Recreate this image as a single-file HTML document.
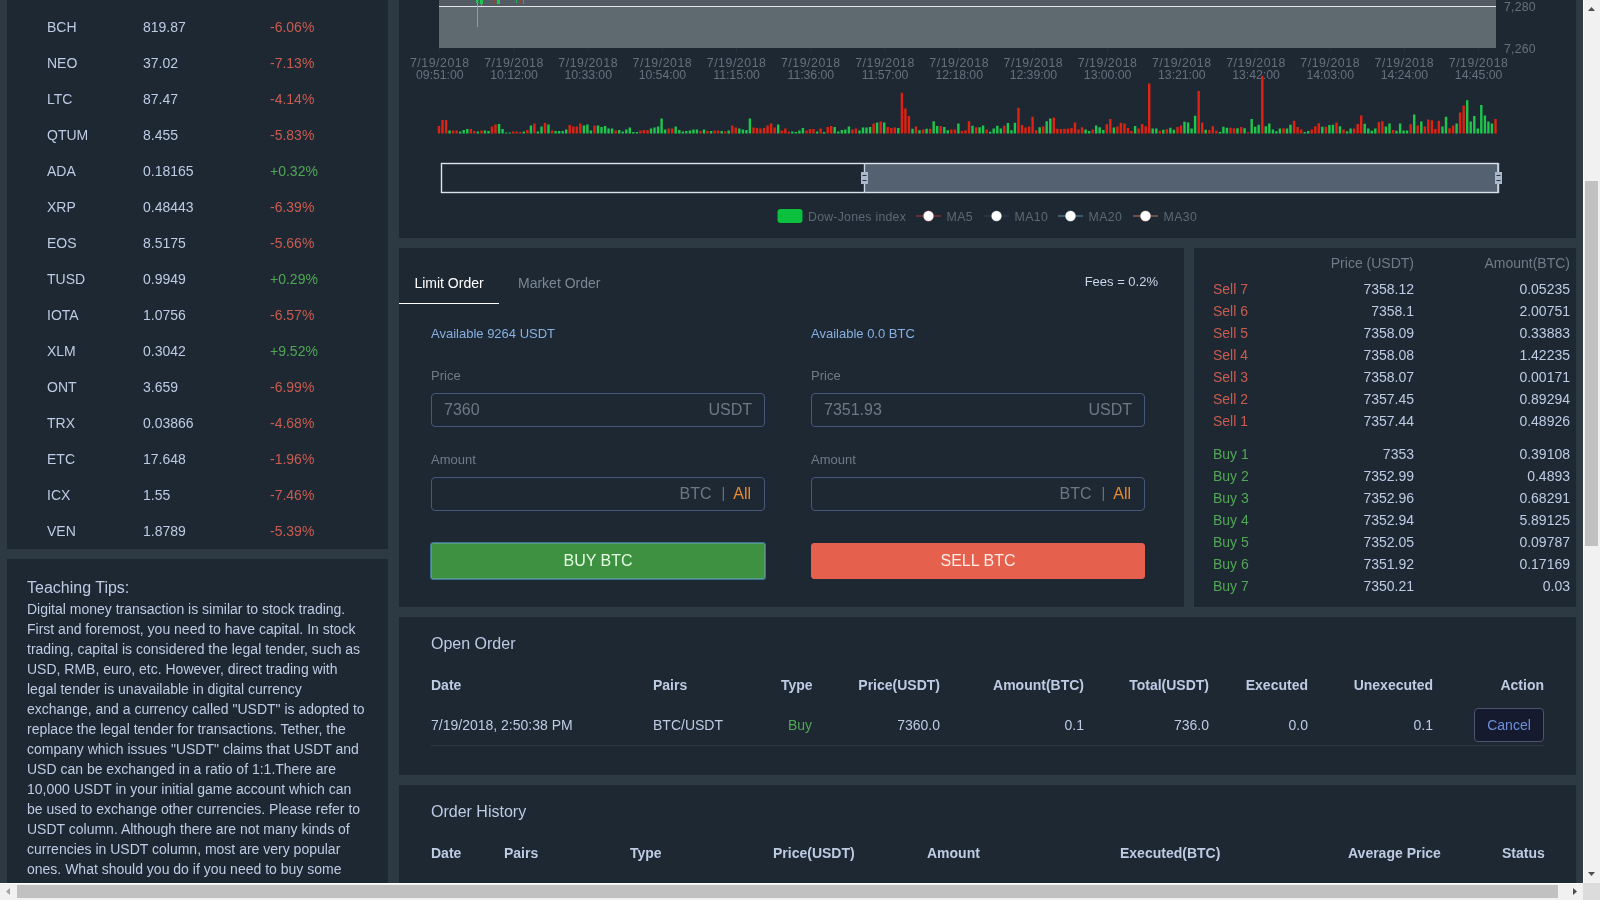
<!DOCTYPE html>
<html lang="en">
<head>
<meta charset="utf-8">
<title>BTC/USDT Trading Simulator</title>
<style>
*{box-sizing:border-box;margin:0;padding:0}
html,body{width:1600px;height:900px;overflow:hidden;background:#2d3a43}
body{font-family:"Liberation Sans",sans-serif;font-size:14px;color:#bdcbe3;position:relative;will-change:transform}
.panel{position:absolute;background:#1d2833}
/* ticker list */
#tickers{left:7px;top:0;width:381px;height:549px}
#tickers table{position:absolute;left:0;top:9px;width:100%;border-collapse:collapse}
#tickers td{height:36px;line-height:36px;padding:0;white-space:nowrap}
#tickers td.s{padding-left:40px;width:136px}
#tickers td.p{width:127px}
.up{color:#52a656}.dn{color:#c95c50}
/* tips */
#tips{left:7px;top:559px;width:381px;height:341px;padding:19px 20px 0 20px}
#tips h4{font-weight:normal;font-size:16px;line-height:20px;height:21px}
#tips p{line-height:20px;font-size:14px}
/* chart */
#chart{left:399px;top:0;width:1177px;height:238px}
#chart svg{position:absolute;left:0;top:0}
/* form */
#form{left:399px;top:248px;width:785px;height:359px}
#book{left:1194px;top:248px;width:382px;height:359px}
#open{left:399px;top:617px;width:1177px;height:158px}
#hist{left:399px;top:785px;width:1177px;height:115px}

.tabs{position:absolute;left:0;top:0;width:100%;height:56px}
.tab{position:absolute;top:16px;height:40px;line-height:39px;font-size:14px;color:#7b8794}
.tab.on{left:0;width:100px;text-align:center;color:#fff;border-bottom:1px solid #fff}
.tab:nth-child(2){left:119px}
.fees{position:absolute;right:26px;top:14px;line-height:39px;font-size:13px;color:#c9d6ea}
.col{position:absolute;top:0;width:334px;height:100%}
.avail{position:absolute;left:0;top:76px;line-height:20px;font-size:13px;color:#87b0e2}
.lb{position:absolute;left:0;line-height:20px;font-size:13px;color:#6f7b88}
.inp{position:absolute;left:0;width:334px;height:34px;border:1px solid #46587a;border-radius:4px;font-size:16px;line-height:32px;color:#6c7885}
.inp .ph{position:absolute;left:12px;top:0}
.inp .unit{position:absolute;right:12px;top:0}
.inp i{font-style:normal;margin:0 8px 0 10px;font-size:14px;position:relative;top:-1px}
.inp b{font-weight:normal;color:#e98a2c;margin-right:1px}
.btn{position:absolute;left:0;top:295px;width:334px;height:36px;border-radius:3px;font-family:inherit;font-size:16px;line-height:34px;text-align:center}
.btn.buy{left:-1px;top:294px;width:336px;height:38px;border-radius:3px;background:#3f9142;border:1px solid #3c7390;box-shadow:inset 0 0 0 1px #5a9c82;line-height:36px;color:#e3ffe3}
.btn.sell{background:#e5604d;border:1px solid #e5604d;color:#ffece6}
#book table{position:absolute;left:0;top:4px;width:100%;border-collapse:collapse}
#book th{font-weight:normal;color:#6f7b88;text-align:right;height:22px;line-height:22px}
#book td{height:22px;line-height:22px;text-align:right;padding:0}
#book th:nth-child(1),#book td:nth-child(1){text-align:left;padding-left:19px;width:91px}
#book th:nth-child(2),#book td:nth-child(2){width:130px;padding-right:1px}
#book th:nth-child(3),#book td:nth-child(3){padding-right:6px}
#book tbody.gap td{height:11px;line-height:11px}
#book thead th{height:26px;line-height:20px;vertical-align:top;padding-top:1px}
h5{position:absolute;left:32px;top:17px;font-size:16px;font-weight:normal;line-height:20px;color:#bdcbe3}
#open table{position:absolute;left:32px;top:47px;width:1113px;border-collapse:collapse;table-layout:fixed}
#open th{font-weight:bold;text-align:right;height:42px;padding:0}
#open td{text-align:right;height:39px;padding:0;border-bottom:1px solid #2c3846;line-height:20px}
#open .l{text-align:left}
.cancel{display:block;margin:-1px 0 0 auto;width:70px;height:34px;border:1px solid #4a556c;border-radius:4px;background:#161a2e;color:#6e8fdc;font-family:inherit;font-size:14px;line-height:32px;padding:0}
.hrow{position:absolute;left:32px;top:58px;width:1120px;border-collapse:collapse;table-layout:fixed}
.hrow th{height:20px;line-height:20px;padding:0;font-weight:bold;text-align:left;white-space:nowrap}
/* scrollbars */
#vsb{position:absolute;left:1583px;top:0;width:17px;height:883px;background:#f1f1f1;box-shadow:inset 1px 0 0 #fff}
#vsb svg,#hsb svg{position:absolute;left:0;top:0}
#hsb{position:absolute;left:0;top:883px;width:1583px;height:17px;background:#f1f1f1;box-shadow:inset 0 1px 0 #fff}
#corner{position:absolute;left:1583px;top:883px;width:17px;height:17px;background:#dcdcdc}
.thumb{position:absolute;background:#c1c1c1}
</style>
</head>
<body>
<div class="panel" id="tickers">
<table>
<tr><td class="s">BCH</td><td class="p">819.87</td><td class="dn">-6.06%</td></tr>
<tr><td class="s">NEO</td><td class="p">37.02</td><td class="dn">-7.13%</td></tr>
<tr><td class="s">LTC</td><td class="p">87.47</td><td class="dn">-4.14%</td></tr>
<tr><td class="s">QTUM</td><td class="p">8.455</td><td class="dn">-5.83%</td></tr>
<tr><td class="s">ADA</td><td class="p">0.18165</td><td class="up">+0.32%</td></tr>
<tr><td class="s">XRP</td><td class="p">0.48443</td><td class="dn">-6.39%</td></tr>
<tr><td class="s">EOS</td><td class="p">8.5175</td><td class="dn">-5.66%</td></tr>
<tr><td class="s">TUSD</td><td class="p">0.9949</td><td class="up">+0.29%</td></tr>
<tr><td class="s">IOTA</td><td class="p">1.0756</td><td class="dn">-6.57%</td></tr>
<tr><td class="s">XLM</td><td class="p">0.3042</td><td class="up">+9.52%</td></tr>
<tr><td class="s">ONT</td><td class="p">3.659</td><td class="dn">-6.99%</td></tr>
<tr><td class="s">TRX</td><td class="p">0.03866</td><td class="dn">-4.68%</td></tr>
<tr><td class="s">ETC</td><td class="p">17.648</td><td class="dn">-1.96%</td></tr>
<tr><td class="s">ICX</td><td class="p">1.55</td><td class="dn">-7.46%</td></tr>
<tr><td class="s">VEN</td><td class="p">1.8789</td><td class="dn">-5.39%</td></tr>
</table>
</div>
<div class="panel" id="tips">
<h4>Teaching Tips:</h4>
<p>Digital money transaction is similar to stock trading. First and foremost, you need to have capital. In stock trading, capital is considered the legal tender, such as USD, RMB, euro, etc. However, direct trading with legal tender is unavailable in digital currency exchange, and a currency called "USDT" is adopted to replace the legal tender for transactions. Tether, the company which issues "USDT" claims that USDT and USD can be exchanged in a ratio of 1:1.There are 10,000 USDT in your initial game account which can be used to exchange other currencies. Please refer to USDT column. Although there are not many kinds of currencies in USDT column, most are very popular ones. What should you do if you need to buy some currencies which are not listed in USDT column?</p>
</div>
<div class="panel" id="chart"><!--CHART-->
<svg width="1177" height="238" viewBox="399 0 1177 238" font-family="'Liberation Sans',sans-serif" font-size="12.3">
<rect x="439" y="0" width="1057" height="6.5" fill="#525b63"/>
<rect x="439" y="6.5" width="1057" height="41.5" fill="#5f6a70"/>
<rect x="439" y="6" width="1057" height="1" fill="#e4e8eb"/>
<g>
<rect x="477" y="0" width="1" height="27" fill="#4fd27c" opacity="0.9"/>
<rect x="476" y="0" width="2.4" height="3" fill="#1fc54c"/>
<rect x="480" y="0" width="3" height="4" fill="#1fc54c"/>
<rect x="481" y="4" width="1" height="2" fill="#1fc54c"/>
<rect x="493.5" y="0" width="2" height="4" fill="#8a4a32"/>
<rect x="497" y="0" width="3" height="4" fill="#1fc54c"/>
<rect x="516" y="0" width="1" height="3" fill="#1fc54c" opacity="0.8"/>
<rect x="520" y="0" width="1.4" height="3.5" fill="#8a4a32"/>
<rect x="523" y="0" width="1" height="4" fill="#1fc54c" opacity="0.8"/>
</g>
<g fill="#65717d" letter-spacing="0.2">
<text x="1504" y="10.5">7,280</text>
<text x="1504" y="52.5">7,260</text>
</g>
<g fill="#65717d" text-anchor="middle" letter-spacing="0.55">
<rect x="439.3" y="48" width="1" height="5" fill="#26313c"/>
<text x="439.8" y="66.8">7/19/2018</text><text x="439.8" y="78.8" letter-spacing="-0.05">09:51:00</text>
<rect x="513.5" y="48" width="1" height="5" fill="#26313c"/>
<text x="514.0" y="66.8">7/19/2018</text><text x="514.0" y="78.8" letter-spacing="-0.05">10:12:00</text>
<rect x="587.7" y="48" width="1" height="5" fill="#26313c"/>
<text x="588.2" y="66.8">7/19/2018</text><text x="588.2" y="78.8" letter-spacing="-0.05">10:33:00</text>
<rect x="661.9" y="48" width="1" height="5" fill="#26313c"/>
<text x="662.4" y="66.8">7/19/2018</text><text x="662.4" y="78.8" letter-spacing="-0.05">10:54:00</text>
<rect x="736.1" y="48" width="1" height="5" fill="#26313c"/>
<text x="736.6" y="66.8">7/19/2018</text><text x="736.6" y="78.8" letter-spacing="-0.05">11:15:00</text>
<rect x="810.3" y="48" width="1" height="5" fill="#26313c"/>
<text x="810.8" y="66.8">7/19/2018</text><text x="810.8" y="78.8" letter-spacing="-0.05">11:36:00</text>
<rect x="884.5" y="48" width="1" height="5" fill="#26313c"/>
<text x="885.0" y="66.8">7/19/2018</text><text x="885.0" y="78.8" letter-spacing="-0.05">11:57:00</text>
<rect x="958.7" y="48" width="1" height="5" fill="#26313c"/>
<text x="959.2" y="66.8">7/19/2018</text><text x="959.2" y="78.8" letter-spacing="-0.05">12:18:00</text>
<rect x="1032.9" y="48" width="1" height="5" fill="#26313c"/>
<text x="1033.4" y="66.8">7/19/2018</text><text x="1033.4" y="78.8" letter-spacing="-0.05">12:39:00</text>
<rect x="1107.1" y="48" width="1" height="5" fill="#26313c"/>
<text x="1107.6" y="66.8">7/19/2018</text><text x="1107.6" y="78.8" letter-spacing="-0.05">13:00:00</text>
<rect x="1181.3" y="48" width="1" height="5" fill="#26313c"/>
<text x="1181.8" y="66.8">7/19/2018</text><text x="1181.8" y="78.8" letter-spacing="-0.05">13:21:00</text>
<rect x="1255.5" y="48" width="1" height="5" fill="#26313c"/>
<text x="1256.0" y="66.8">7/19/2018</text><text x="1256.0" y="78.8" letter-spacing="-0.05">13:42:00</text>
<rect x="1329.7" y="48" width="1" height="5" fill="#26313c"/>
<text x="1330.2" y="66.8">7/19/2018</text><text x="1330.2" y="78.8" letter-spacing="-0.05">14:03:00</text>
<rect x="1403.9" y="48" width="1" height="5" fill="#26313c"/>
<text x="1404.4" y="66.8">7/19/2018</text><text x="1404.4" y="78.8" letter-spacing="-0.05">14:24:00</text>
<rect x="1478.1" y="48" width="1" height="5" fill="#26313c"/>
<text x="1478.6" y="66.8">7/19/2018</text><text x="1478.6" y="78.8" letter-spacing="-0.05">14:45:00</text>
</g>
<path fill="#df2310" d="M437.8 133.5v-7.5h2.4v7.5zM441.3 133.5v-13.5h2.4v13.5zM444.9 133.5v-13.5h2.4v13.5zM451.9 133.5v-3.0h2.4v3.0zM455.5 133.5v-3.0h2.4v3.0zM469.6 133.5v-4.5h2.4v4.5zM473.1 133.5v-2.5h2.4v2.5zM480.2 133.5v-3.0h2.4v3.0zM490.8 133.5v-7.0h2.4v7.0zM494.3 133.5v-9.0h2.4v9.0zM512.0 133.5v-2.0h2.4v2.0zM515.5 133.5v-2.0h2.4v2.0zM519.1 133.5v-1.5h2.4v1.5zM526.1 133.5v-3.5h2.4v3.5zM533.2 133.5v-10.0h2.4v10.0zM543.8 133.5v-10.5h2.4v10.5zM550.9 133.5v-3.0h2.4v3.0zM568.5 133.5v-8.5h2.4v8.5zM572.1 133.5v-7.0h2.4v7.0zM575.6 133.5v-7.0h2.4v7.0zM579.1 133.5v-10.0h2.4v10.0zM593.3 133.5v-8.0h2.4v8.0zM614.5 133.5v-3.0h2.4v3.0zM639.2 133.5v-3.0h2.4v3.0zM642.7 133.5v-3.5h2.4v3.5zM646.3 133.5v-3.5h2.4v3.5zM667.5 133.5v-5.0h2.4v5.0zM671.0 133.5v-5.0h2.4v5.0zM699.3 133.5v-2.5h2.4v2.5zM706.3 133.5v-2.5h2.4v2.5zM713.4 133.5v-3.0h2.4v3.0zM716.9 133.5v-3.0h2.4v3.0zM724.0 133.5v-2.0h2.4v2.0zM731.1 133.5v-8.0h2.4v8.0zM734.6 133.5v-6.0h2.4v6.0zM752.3 133.5v-6.0h2.4v6.0zM755.8 133.5v-5.5h2.4v5.5zM759.3 133.5v-5.0h2.4v5.0zM762.9 133.5v-5.5h2.4v5.5zM766.4 133.5v-8.0h2.4v8.0zM769.9 133.5v-10.0h2.4v10.0zM773.5 133.5v-6.0h2.4v6.0zM780.5 133.5v-3.0h2.4v3.0zM784.1 133.5v-5.0h2.4v5.0zM787.6 133.5v-2.0h2.4v2.0zM805.3 133.5v-3.0h2.4v3.0zM808.8 133.5v-4.5h2.4v4.5zM812.3 133.5v-4.5h2.4v4.5zM819.4 133.5v-5.0h2.4v5.0zM826.5 133.5v-6.5h2.4v6.5zM830.0 133.5v-7.5h2.4v7.5zM851.2 133.5v-4.0h2.4v4.0zM854.7 133.5v-5.0h2.4v5.0zM872.4 133.5v-10.0h2.4v10.0zM879.5 133.5v-12.0h2.4v12.0zM886.5 133.5v-6.5h2.4v6.5zM890.1 133.5v-5.5h2.4v5.5zM893.6 133.5v-6.0h2.4v6.0zM900.7 133.5v-40.7h2.4v40.7zM904.2 133.5v-25.0h2.4v25.0zM907.7 133.5v-17.5h2.4v17.5zM914.8 133.5v-7.0h2.4v7.0zM921.9 133.5v-4.0h2.4v4.0zM928.9 133.5v-4.7h2.4v4.7zM939.5 133.5v-7.4h2.4v7.4zM950.1 133.5v-4.0h2.4v4.0zM953.7 133.5v-4.0h2.4v4.0zM960.7 133.5v-2.5h2.4v2.5zM964.3 133.5v-3.2h2.4v3.2zM967.8 133.5v-12.2h2.4v12.2zM974.9 133.5v-6.2h2.4v6.2zM985.5 133.5v-4.0h2.4v4.0zM1003.1 133.5v-7.7h2.4v7.7zM1017.3 133.5v-25.7h2.4v25.7zM1020.8 133.5v-8.5h2.4v8.5zM1024.3 133.5v-5.9h2.4v5.9zM1027.9 133.5v-7.0h2.4v7.0zM1031.4 133.5v-16.7h2.4v16.7zM1034.9 133.5v-3.2h2.4v3.2zM1042.0 133.5v-7.0h2.4v7.0zM1052.6 133.5v-16.0h2.4v16.0zM1056.1 133.5v-4.7h2.4v4.7zM1059.7 133.5v-4.4h2.4v4.4zM1063.2 133.5v-4.7h2.4v4.7zM1066.7 133.5v-4.7h2.4v4.7zM1070.3 133.5v-5.5h2.4v5.5zM1073.8 133.5v-11.1h2.4v11.1zM1077.3 133.5v-4.0h2.4v4.0zM1080.9 133.5v-6.2h2.4v6.2zM1091.5 133.5v-4.0h2.4v4.0zM1105.6 133.5v-9.2h2.4v9.2zM1109.1 133.5v-14.5h2.4v14.5zM1116.2 133.5v-7.0h2.4v7.0zM1119.7 133.5v-10.7h2.4v10.7zM1123.3 133.5v-10.0h2.4v10.0zM1126.8 133.5v-5.5h2.4v5.5zM1130.3 133.5v-2.5h2.4v2.5zM1137.4 133.5v-5.0h2.4v5.0zM1140.9 133.5v-9.5h2.4v9.5zM1144.5 133.5v-7.2h2.4v7.2zM1148.0 133.5v-50.0h2.4v50.0zM1158.6 133.5v-2.7h2.4v2.7zM1165.7 133.5v-4.2h2.4v4.2zM1176.3 133.5v-6.5h2.4v6.5zM1179.8 133.5v-8.0h2.4v8.0zM1197.5 133.5v-42.5h2.4v42.5zM1201.0 133.5v-11.0h2.4v11.0zM1208.1 133.5v-3.5h2.4v3.5zM1211.6 133.5v-7.2h2.4v7.2zM1215.1 133.5v-2.7h2.4v2.7zM1229.3 133.5v-5.7h2.4v5.7zM1232.8 133.5v-5.3h2.4v5.3zM1239.9 133.5v-6.5h2.4v6.5zM1246.9 133.5v-1.2h2.4v1.2zM1261.1 133.5v-57.8h2.4v57.8zM1282.3 133.5v-5.3h2.4v5.3zM1292.9 133.5v-12.7h2.4v12.7zM1296.4 133.5v-6.5h2.4v6.5zM1299.9 133.5v-4.1h2.4v4.1zM1310.5 133.5v-4.1h2.4v4.1zM1314.1 133.5v-7.2h2.4v7.2zM1317.6 133.5v-10.3h2.4v10.3zM1324.7 133.5v-6.8h2.4v6.8zM1335.3 133.5v-11.1h2.4v11.1zM1342.3 133.5v-4.1h2.4v4.1zM1352.9 133.5v-4.9h2.4v4.9zM1356.5 133.5v-9.6h2.4v9.6zM1360.0 133.5v-18.1h2.4v18.1zM1377.7 133.5v-11.5h2.4v11.5zM1381.2 133.5v-12.3h2.4v12.3zM1391.8 133.5v-3.6h2.4v3.6zM1409.5 133.5v-9.3h2.4v9.3zM1416.5 133.5v-8.0h2.4v8.0zM1423.6 133.5v-7.1h2.4v7.1zM1427.1 133.5v-14.1h2.4v14.1zM1430.7 133.5v-13.2h2.4v13.2zM1434.2 133.5v-4.5h2.4v4.5zM1437.7 133.5v-12.8h2.4v12.8zM1448.3 133.5v-5.3h2.4v5.3zM1451.9 133.5v-8.0h2.4v8.0zM1458.9 133.5v-21.1h2.4v21.1zM1462.5 133.5v-28.1h2.4v28.1zM1494.3 133.5v-14.5h2.4v14.5z"/>
<path fill="#1fc54c" d="M448.4 133.5v-3.0h2.4v3.0zM459.0 133.5v-2.0h2.4v2.0zM462.5 133.5v-3.5h2.4v3.5zM466.1 133.5v-4.5h2.4v4.5zM476.7 133.5v-2.0h2.4v2.0zM483.7 133.5v-3.0h2.4v3.0zM487.3 133.5v-2.5h2.4v2.5zM497.9 133.5v-9.5h2.4v9.5zM501.4 133.5v-4.5h2.4v4.5zM504.9 133.5v-1.0h2.4v1.0zM508.5 133.5v-1.0h2.4v1.0zM522.6 133.5v-2.0h2.4v2.0zM529.7 133.5v-8.0h2.4v8.0zM536.7 133.5v-2.0h2.4v2.0zM540.3 133.5v-7.0h2.4v7.0zM547.3 133.5v-9.0h2.4v9.0zM554.4 133.5v-2.5h2.4v2.5zM557.9 133.5v-2.5h2.4v2.5zM561.5 133.5v-2.5h2.4v2.5zM565.0 133.5v-4.0h2.4v4.0zM582.7 133.5v-8.0h2.4v8.0zM586.2 133.5v-9.0h2.4v9.0zM589.7 133.5v-3.0h2.4v3.0zM596.8 133.5v-8.0h2.4v8.0zM600.3 133.5v-6.5h2.4v6.5zM603.9 133.5v-7.5h2.4v7.5zM607.4 133.5v-5.0h2.4v5.0zM610.9 133.5v-5.0h2.4v5.0zM618.0 133.5v-3.5h2.4v3.5zM621.5 133.5v-2.0h2.4v2.0zM625.1 133.5v-4.0h2.4v4.0zM628.6 133.5v-6.0h2.4v6.0zM632.1 133.5v-1.5h2.4v1.5zM635.7 133.5v-1.5h2.4v1.5zM649.8 133.5v-5.0h2.4v5.0zM653.3 133.5v-6.0h2.4v6.0zM656.9 133.5v-7.0h2.4v7.0zM660.4 133.5v-15.0h2.4v15.0zM663.9 133.5v-4.0h2.4v4.0zM674.5 133.5v-7.0h2.4v7.0zM678.1 133.5v-3.5h2.4v3.5zM681.6 133.5v-2.0h2.4v2.0zM685.1 133.5v-2.5h2.4v2.5zM688.7 133.5v-3.0h2.4v3.0zM692.2 133.5v-4.0h2.4v4.0zM695.7 133.5v-4.0h2.4v4.0zM702.8 133.5v-4.0h2.4v4.0zM709.9 133.5v-2.5h2.4v2.5zM720.5 133.5v-2.5h2.4v2.5zM727.5 133.5v-3.0h2.4v3.0zM738.1 133.5v-5.0h2.4v5.0zM741.7 133.5v-4.0h2.4v4.0zM745.2 133.5v-3.5h2.4v3.5zM748.7 133.5v-15.0h2.4v15.0zM777.0 133.5v-9.0h2.4v9.0zM791.1 133.5v-2.0h2.4v2.0zM794.7 133.5v-1.5h2.4v1.5zM798.2 133.5v-3.0h2.4v3.0zM801.7 133.5v-5.5h2.4v5.5zM815.9 133.5v-2.0h2.4v2.0zM822.9 133.5v-1.5h2.4v1.5zM833.5 133.5v-6.5h2.4v6.5zM837.1 133.5v-2.0h2.4v2.0zM840.6 133.5v-3.5h2.4v3.5zM844.1 133.5v-4.0h2.4v4.0zM847.7 133.5v-7.0h2.4v7.0zM858.3 133.5v-3.0h2.4v3.0zM861.8 133.5v-6.0h2.4v6.0zM865.3 133.5v-6.0h2.4v6.0zM868.9 133.5v-6.5h2.4v6.5zM875.9 133.5v-11.0h2.4v11.0zM883.0 133.5v-11.0h2.4v11.0zM897.1 133.5v-5.5h2.4v5.5zM911.3 133.5v-4.7h2.4v4.7zM918.3 133.5v-3.2h2.4v3.2zM925.4 133.5v-4.7h2.4v4.7zM932.5 133.5v-12.2h2.4v12.2zM936.0 133.5v-7.4h2.4v7.4zM943.1 133.5v-6.6h2.4v6.6zM946.6 133.5v-3.2h2.4v3.2zM957.2 133.5v-10.0h2.4v10.0zM971.3 133.5v-7.7h2.4v7.7zM978.4 133.5v-6.2h2.4v6.2zM981.9 133.5v-8.1h2.4v8.1zM989.0 133.5v-1.7h2.4v1.7zM992.5 133.5v-5.1h2.4v5.1zM996.1 133.5v-7.7h2.4v7.7zM999.6 133.5v-5.1h2.4v5.1zM1006.7 133.5v-10.4h2.4v10.4zM1010.2 133.5v-3.2h2.4v3.2zM1013.7 133.5v-10.7h2.4v10.7zM1038.5 133.5v-6.2h2.4v6.2zM1045.5 133.5v-12.2h2.4v12.2zM1049.1 133.5v-14.9h2.4v14.9zM1084.4 133.5v-4.0h2.4v4.0zM1087.9 133.5v-2.5h2.4v2.5zM1095.0 133.5v-8.1h2.4v8.1zM1098.5 133.5v-6.2h2.4v6.2zM1102.1 133.5v-3.6h2.4v3.6zM1112.7 133.5v-5.9h2.4v5.9zM1133.9 133.5v-7.5h2.4v7.5zM1151.5 133.5v-5.0h2.4v5.0zM1155.1 133.5v-5.0h2.4v5.0zM1162.1 133.5v-3.8h2.4v3.8zM1169.2 133.5v-5.7h2.4v5.7zM1172.7 133.5v-3.8h2.4v3.8zM1183.3 133.5v-11.7h2.4v11.7zM1186.9 133.5v-11.0h2.4v11.0zM1190.4 133.5v-5.0h2.4v5.0zM1193.9 133.5v-17.7h2.4v17.7zM1204.5 133.5v-3.8h2.4v3.8zM1218.7 133.5v-1.6h2.4v1.6zM1222.2 133.5v-6.8h2.4v6.8zM1225.7 133.5v-5.7h2.4v5.7zM1236.3 133.5v-5.3h2.4v5.3zM1243.4 133.5v-5.3h2.4v5.3zM1250.5 133.5v-14.5h2.4v14.5zM1254.0 133.5v-6.8h2.4v6.8zM1257.5 133.5v-8.8h2.4v8.8zM1264.6 133.5v-7.2h2.4v7.2zM1268.1 133.5v-10.0h2.4v10.0zM1271.7 133.5v-4.1h2.4v4.1zM1275.2 133.5v-2.2h2.4v2.2zM1278.7 133.5v-4.9h2.4v4.9zM1285.8 133.5v-4.9h2.4v4.9zM1289.3 133.5v-8.8h2.4v8.8zM1303.5 133.5v-1.4h2.4v1.4zM1307.0 133.5v-2.6h2.4v2.6zM1321.1 133.5v-6.8h2.4v6.8zM1328.2 133.5v-8.4h2.4v8.4zM1331.7 133.5v-8.8h2.4v8.8zM1338.8 133.5v-7.2h2.4v7.2zM1345.9 133.5v-2.2h2.4v2.2zM1349.4 133.5v-4.9h2.4v4.9zM1363.5 133.5v-9.7h2.4v9.7zM1367.1 133.5v-4.9h2.4v4.9zM1370.6 133.5v-2.7h2.4v2.7zM1374.1 133.5v-4.9h2.4v4.9zM1384.7 133.5v-7.1h2.4v7.1zM1388.3 133.5v-10.1h2.4v10.1zM1395.3 133.5v-2.7h2.4v2.7zM1398.9 133.5v-10.1h2.4v10.1zM1402.4 133.5v-3.1h2.4v3.1zM1405.9 133.5v-3.1h2.4v3.1zM1413.0 133.5v-18.9h2.4v18.9zM1420.1 133.5v-11.9h2.4v11.9zM1441.3 133.5v-7.1h2.4v7.1zM1444.8 133.5v-16.7h2.4v16.7zM1455.4 133.5v-10.1h2.4v10.1zM1466.0 133.5v-33.3h2.4v33.3zM1469.5 133.5v-11.9h2.4v11.9zM1473.1 133.5v-17.6h2.4v17.6zM1476.6 133.5v-4.9h2.4v4.9zM1480.1 133.5v-28.5h2.4v28.5zM1483.7 133.5v-18.0h2.4v18.0zM1487.2 133.5v-11.9h2.4v11.9zM1490.7 133.5v-10.1h2.4v10.1z"/>
<rect x="864" y="163.5" width="634" height="29" fill="#a7b7cc" fill-opacity="0.4"/>
<rect x="441.5" y="163.5" width="1056.5" height="29" fill="none" stroke="#dde3ea" stroke-width="1.4"/>
<rect x="863.8" y="163" width="1.4" height="30" fill="#c9d3df"/>
<rect x="861.0" y="172" width="7" height="12" fill="#a9b8cd"/>
<rect x="862.5" y="175" width="4" height="1" fill="#2a3442"/><rect x="862.5" y="180" width="4" height="1" fill="#2a3442"/>
<rect x="1497.8" y="163" width="1.4" height="30" fill="#c9d3df"/>
<rect x="1495.0" y="172" width="7" height="12" fill="#a9b8cd"/>
<rect x="1496.5" y="175" width="4" height="1" fill="#2a3442"/><rect x="1496.5" y="180" width="4" height="1" fill="#2a3442"/>
<rect x="777.5" y="209" width="25" height="14" rx="3" fill="#0bc03c"/>
<g fill="#5d6875" letter-spacing="0.4">
<text x="808" y="220.5" letter-spacing="0.25">Dow-Jones index</text>
<rect x="916" y="215.1" width="25" height="1.8" fill="#c23531" opacity="0.5"/><circle cx="928.5" cy="216" r="5.2" fill="#fff" stroke="#c23531" stroke-opacity="0.3" stroke-width="1"/>
<text x="946.5" y="220.5">MA5</text>
<rect x="984" y="215.1" width="25" height="1.8" fill="#2f4554" opacity="0.5"/><circle cx="996.5" cy="216" r="5.2" fill="#fff" stroke="#2f4554" stroke-opacity="0.3" stroke-width="1"/>
<text x="1014.5" y="220.5">MA10</text>
<rect x="1058" y="215.1" width="25" height="1.8" fill="#61a0a8" opacity="0.5"/><circle cx="1070.5" cy="216" r="5.2" fill="#fff" stroke="#61a0a8" stroke-opacity="0.3" stroke-width="1"/>
<text x="1088.5" y="220.5">MA20</text>
<rect x="1133" y="215.1" width="25" height="1.8" fill="#d48265" opacity="0.5"/><circle cx="1145.5" cy="216" r="5.2" fill="#fff" stroke="#d48265" stroke-opacity="0.3" stroke-width="1"/>
<text x="1163.5" y="220.5">MA30</text>
</g>
</svg>
<!--/CHART--></div>
<div class="panel" id="form">
<div class="tabs"><span class="tab on">Limit Order</span><span class="tab">Market Order</span><span class="fees">Fees = 0.2%</span></div>
<div class="col" style="left:32px">
<div class="avail">Available 9264 USDT</div>
<label class="lb" style="top:118px">Price</label>
<div class="inp" style="top:145px"><span class="ph">7360</span><span class="unit">USDT</span></div>
<label class="lb" style="top:202px">Amount</label>
<div class="inp" style="top:229px"><span class="ph"></span><span class="unit">BTC<i>|</i><b>All</b></span></div>
<button class="btn buy">BUY BTC</button>
</div>
<div class="col" style="left:412px">
<div class="avail">Available 0.0 BTC</div>
<label class="lb" style="top:118px">Price</label>
<div class="inp" style="top:145px"><span class="ph">7351.93</span><span class="unit">USDT</span></div>
<label class="lb" style="top:202px">Amount</label>
<div class="inp" style="top:229px"><span class="ph"></span><span class="unit">BTC<i>|</i><b>All</b></span></div>
<button class="btn sell">SELL BTC</button>
</div>
</div>
<div class="panel" id="book">
<table>
<thead><tr><th></th><th>Price (USDT)</th><th>Amount(BTC)</th></tr></thead>
<tbody class="sells">
<tr><td class="dn">Sell 7</td><td>7358.12</td><td>0.05235</td></tr>
<tr><td class="dn">Sell 6</td><td>7358.1</td><td>2.00751</td></tr>
<tr><td class="dn">Sell 5</td><td>7358.09</td><td>0.33883</td></tr>
<tr><td class="dn">Sell 4</td><td>7358.08</td><td>1.42235</td></tr>
<tr><td class="dn">Sell 3</td><td>7358.07</td><td>0.00171</td></tr>
<tr><td class="dn">Sell 2</td><td>7357.45</td><td>0.89294</td></tr>
<tr><td class="dn">Sell 1</td><td>7357.44</td><td>0.48926</td></tr>
</tbody>
<tbody class="gap"><tr><td colspan="3"></td></tr></tbody>
<tbody class="buys">
<tr><td class="up">Buy 1</td><td>7353</td><td>0.39108</td></tr>
<tr><td class="up">Buy 2</td><td>7352.99</td><td>0.4893</td></tr>
<tr><td class="up">Buy 3</td><td>7352.96</td><td>0.68291</td></tr>
<tr><td class="up">Buy 4</td><td>7352.94</td><td>5.89125</td></tr>
<tr><td class="up">Buy 5</td><td>7352.05</td><td>0.09787</td></tr>
<tr><td class="up">Buy 6</td><td>7351.92</td><td>0.17169</td></tr>
<tr><td class="up">Buy 7</td><td>7350.21</td><td>0.03</td></tr>
</tbody>
</table>
</div>
<div class="panel" id="open">
<h5>Open Order</h5>
<table>
<thead><tr><th class="l" style="width:222px">Date</th><th class="l" style="width:128px">Pairs</th><th class="l" style="width:50px">Type</th><th style="width:109px">Price(USDT)</th><th style="width:144px">Amount(BTC)</th><th style="width:125px">Total(USDT)</th><th style="width:99px">Executed</th><th style="width:125px">Unexecuted</th><th style="width:111px">Action</th></tr></thead>
<tbody><tr><td class="l">7/19/2018, 2:50:38 PM</td><td class="l">BTC/USDT</td><td class="up" style="text-align:right;padding-right:19px">Buy</td><td>7360.0</td><td>0.1</td><td>736.0</td><td>0.0</td><td>0.1</td><td><button class="cancel">Cancel</button></td></tr></tbody>
</table>
</div>
<div class="panel" id="hist">
<h5>Order History</h5>
<table class="hrow"><thead><tr><th style="width:73px">Date</th><th style="width:126px">Pairs</th><th style="width:143px">Type</th><th style="width:154px">Price(USDT)</th><th style="width:193px">Amount</th><th style="width:228px">Executed(BTC)</th><th style="width:154px">Average Price</th><th>Status</th></tr></thead></table>
</div>
<div id="vsb"><svg width="17" height="883"><path d="M5 11h7l-3.5-4z" fill="#505050"/><path d="M5 872h7l-3.5 4z" fill="#505050"/></svg><div class="thumb" style="left:2px;top:181px;width:13px;height:365px"></div></div>
<div id="hsb"><svg width="1583" height="17"><path d="M10 5v7l-4-3.5z" fill="#a3a3a3"/><path d="M1573 5v7l4-3.5z" fill="#505050"/></svg><div class="thumb" style="left:17px;top:2px;width:1541px;height:13px"></div></div>
<div id="corner"></div>
</body>
</html>
